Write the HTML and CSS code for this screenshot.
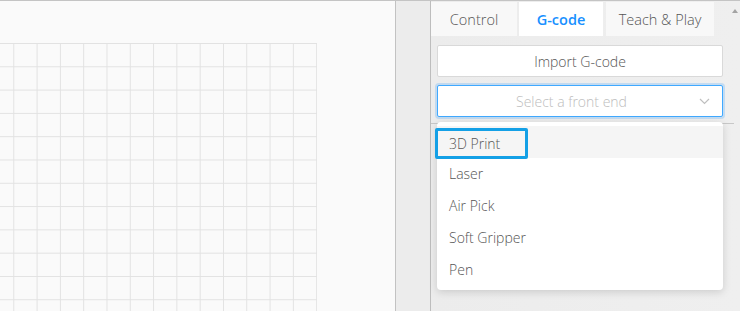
FILE: index.html
```html
<!DOCTYPE html>
<html lang="en">
<head>
  <meta charset="UTF-8">
  <title>G-code</title>
  <link rel="stylesheet" href="styles.css">
</head>
<body>
  <div class="app">
    <div class="canvas">
      <div class="grid"></div>
    </div>
    <div class="gutter"></div>
    <div class="panel">
      <span class="scroll-up"></span>
      <div class="tabs">
        <div class="tab">Control</div>
        <div class="tab active">G-code</div>
        <div class="tab wide">Teach &amp; Play</div>
      </div>
      <div class="panel-body">
        <button class="btn">Import G-code</button>
        <div class="select">
          <span class="placeholder">Select a front end</span>
          <svg class="arrow" width="11" height="7" viewBox="0 0 11 7">
            <path d="M1 1 L5.5 5.5 L10 1" fill="none" stroke="#bfbfbf" stroke-width="1.2"/>
          </svg>
        </div>
        <div class="divider"></div>
        <ul class="dropdown">
          <li class="item hover"><span class="focus">3D Print</span></li>
          <li class="item">Laser</li>
          <li class="item">Air Pick</li>
          <li class="item">Soft Gripper</li>
          <li class="item">Pen</li>
        </ul>
      </div>
    </div>
  </div>
</body>
</html>
```

FILE: styles.css
```css
html, body {
  margin: 0;
  padding: 0;
}
body {
  width: 740px;
  height: 311px;
  overflow: hidden;
  font-family: "Open Sans", Arial, sans-serif;
  font-weight: 300;
  color: #555;
}
.app {
  display: flex;
  height: 311px;
  box-sizing: border-box;
  border-top: 1px solid #c4c4c4;
}
.canvas {
  width: 395px;
  background: #fafafa;
  border-right: 1px solid #c2c2c2;
  padding-top: 42px;
  overflow: hidden;
}
.grid {
  width: 317px;
  height: 280px;
  background-image:
    linear-gradient(to right, #e2e2e2 1px, transparent 1px),
    linear-gradient(to bottom, #e2e2e2 1px, transparent 1px);
  background-size: 23.31px 23.31px;
  background-position: 13.3px 0;
}
.gutter {
  width: 34px;
  background: #ececec;
  border-right: 1px solid #bdbdbd;
}
.panel {
  flex: 1;
  position: relative;
  background: linear-gradient(to right, #ececec, #efefef);
}
.scroll-up {
  position: absolute;
  right: 2px;
  top: 8px;
  width: 0;
  height: 0;
  border-left: 3px solid transparent;
  border-right: 3px solid transparent;
  border-bottom: 4px solid #a3a3a3;
}
.tabs {
  display: flex;
  gap: 2px;
  margin-top: 1px;
  height: 34px;
}
.tab {
  width: 86px;
  background: #f8f8f8;
  font-size: 14.5px;
  line-height: 35px;
  text-align: center;
  color: #555;
}
.tab.active {
  width: 84px;
  background: #fff;
  color: #1890ff;
  font-weight: 600;
}
.tab.wide {
  width: 108px;
  margin-left: 1px;
}
.panel-body {
  position: relative;
  padding: 9px 17px 0 6px;
  display: flex;
  flex-direction: column;
  gap: 8px;
}
.btn {
  height: 32px;
  background: #fff;
  border: 1px solid #d9d9d9;
  border-radius: 2px;
  font-family: inherit;
  font-weight: 300;
  font-size: 14px;
  color: #555;
  padding: 0;
}
.select {
  height: 32px;
  box-sizing: border-box;
  background: #fff;
  border: 1px solid #40a9ff;
  border-radius: 2px;
  box-shadow: 0 0 0 2px rgba(24, 144, 255, 0.2);
  display: flex;
  align-items: center;
  justify-content: center;
  padding-right: 17px;
  position: relative;
}
.placeholder {
  font-size: 14px;
  color: #bdbdbd;
}
.arrow {
  position: absolute;
  right: 12px;
  top: 12px;
}
.divider {
  height: 1px;
  background: #c8c8c8;
  margin: -2px -11px 0 -6px;
}
.dropdown {
  position: absolute;
  left: 6px;
  top: 86px;
  width: 286px;
  margin: 0;
  padding: 4px 0;
  list-style: none;
  background: #fff;
  border-radius: 4px;
  box-shadow: 0 2px 8px rgba(0, 0, 0, 0.15);
}
.item {
  height: 32px;
  line-height: 32px;
  padding: 0 12px;
  font-size: 14px;
  color: #555;
}
.item.hover {
  background: #f5f5f5;
  position: relative;
}
.focus {
  position: absolute;
  left: -2px;
  top: 2px;
  box-sizing: border-box;
  width: 93px;
  height: 31px;
  border: 3px solid #14a0e6;
  border-radius: 2px;
  padding-left: 11px;
  line-height: 25px;
}
```
